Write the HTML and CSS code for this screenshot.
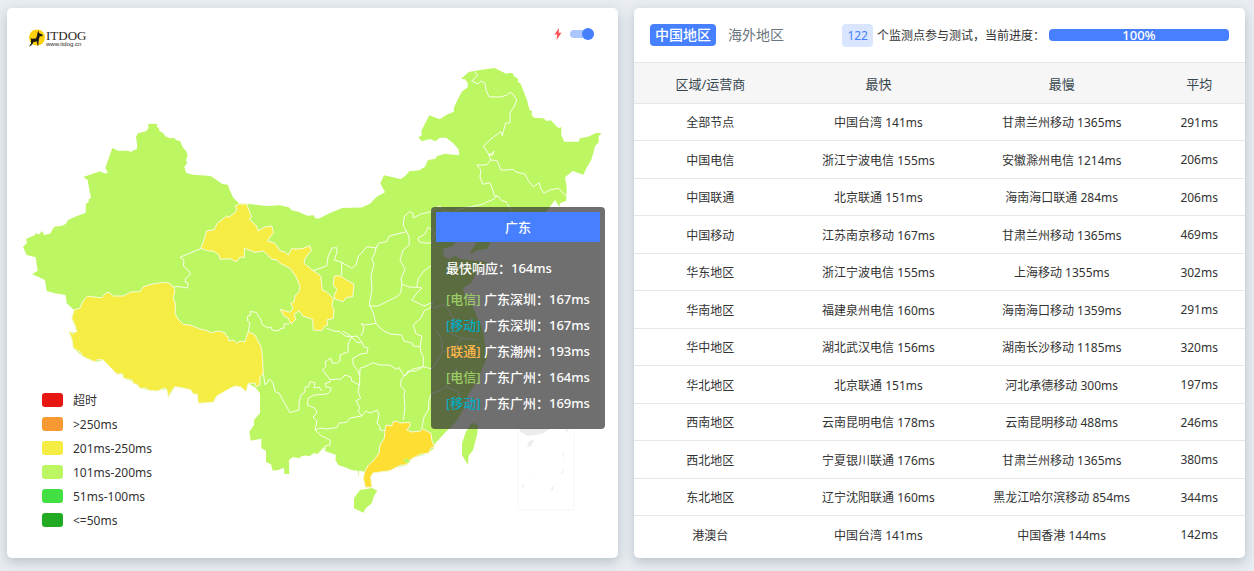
FILE: index.html
```
<!DOCTYPE html>
<html lang="zh-CN">
<head>
    <meta charset="UTF-8">
    <meta name="viewport" content="width=device-width, initial-scale=1.0">
    <title>ITDOG</title>
    <link rel="stylesheet" href="styles.css">
</head>
<body>
    <main class="row">
        <section class="card map-card">
            <svg class="map" viewBox="7 8 611 550" aria-label="中国地图">
                <!-- mainland -->
                <path class="land" d="M23 247L27 243 26 239 35 235 36 233 39 234.500 42 231 44 235 50 233.700 54.300 226.700 62 225.700 66 223.700 68 220 77 216 85.700 212.700 85.700 204 88.700 202 88.700 199 91 198 89 188 87.700 180 83.300 177 100 171.300 104 173.300 108 173 105.300 168 112.300 148 118.300 150.700 128.300 150.700 130.300 152 136.700 149 137.300 146 136 136.700 138 133.300 146 131.300 148.700 128 148 124 157.300 123.700 156.700 127 159 128 159 130.300 163.700 133.700 165.300 136.300 170 138.300 174.300 138 176 140 180 141 183 147.700 186 151 187.700 155.300 186 160 187.300 163 184.300 166.700 186.300 173 193.300 174.700 210.700 176 222.300 184 227.700 184.700 230 190.700 233 197.300 239 203.500 246.700 203.700 266.700 206 280 205.300 288.700 207.300 291.700 210.300 298.300 211.700 307.300 215.700 314 215.300 315 218.300 319 218.500 330 213 342.300 208 361.700 207.500 370 203.700 376.700 196.700 385 192.300 380.300 183.300 384 175.300 400.700 179 405 176.300 409.300 171.300 419.300 170.300 425 166.700 428 160 435.700 158.700 436.700 156.300 445 153.700 451 154.500 459.500 155 458.300 149 453.300 143.300 446 137.700 440 137.700 435.300 141.300 430 139 421.700 141.300 418.300 137 421.700 135.700 421.300 131 429.300 115.300 439.700 119.300 446.700 114.700 454 111.700 453.700 108.300 456 103 461.700 91.700 467.700 87.300 467.700 82.700 465 79.300 461 79 468.700 72 480 70 494.700 68 506.700 74 508 73 512.700 73 514 76 518.300 79 517.700 81.700 520.700 83.700 523 90 526.700 99.300 529.700 110.300 532 111 531.700 115 534 117.700 543.300 118.300 546.700 121 550.700 120.300 558.300 128 561.300 127.300 561.300 135 564.300 141.700 578.700 141.700 580 138.300 588.300 136.700 595.700 133 601.700 133 598.700 136.300 598.700 142.300 595.300 145.700 591.300 160 587 167 583.300 174.700 572.700 171 565 177.300 566.700 187.300 566.300 200.700 560 203.300 559.300 207 555 200 546.700 211 535 222 510 235 491 242 487 249 478 250 470.700 254 470 252 474.700 246 478 236 470 230 462 236 456 242 453 246 443 249 444 257 450 259 455 255.700 460 259 478 261 488 262 478 270 471 283 463 288 465 297 473 307 478 319 483 330 485 345 488 355 483 367 476 383 468 395 464.700 407 456 422 444.700 433 434.700 444 434 448 428.300 453.300 413 458 406.700 465 395 467.700 390 470.700 373 473 370.700 477 372 487.300 365.300 487.300 363.300 478.300 364.700 471.700 359 470.500 358.700 477.500 358 471 351.700 470 345 467.300 338.300 465 335.300 460 336 455 325 451 324 447.300 317.300 454 314 453 309.300 456.300 306 455.500 301.700 456 299.300 458.300 293 457 289 460 289.300 474 284.300 474 284 467.700 278 470 272.700 470.700 271 464.300 266 462 266 451 261.300 448 261.300 438.700 250.700 440.700 249.300 431.700 254 425 254 420 260 413.300 260 393.300 256 388 248.300 383.300 246 391.700 241 387 235 386 228.300 389.300 216.700 396 213.300 402.300 198.300 403.300 197.300 394.300 191 390 175 386.700 168.300 398 166.700 389.300 150 390.700 140 387.700 133.300 381.700 123.300 378.300 122.700 374 116.700 374 110 367 103.300 360 95 362 83.300 356.700 73.300 348.300 71.700 338.300 69 332.700 76.700 331.700 71.700 318.300 74 310 66.700 303.300 65.700 295 55 293.300 46.700 291 45 280 32.300 274.300 37.700 270.700 35.700 257.300 26.700 255Z"/>
                <!-- Hainan, Taiwan -->
                <path class="land" d="M360 490L366 489 372 488 377.300 490.700 374 496 371.700 503.300 366 508 363.300 512.700 354 508.300 354 498.300Z"/>
                <path class="land" d="M471 424L475 423 478 426 477 435 473 450 468.500 456 468 465 462 455 462 443 466 431.700Z"/>
                <!-- Tibet -->
                <path class="land slow" d="M74 310L80 308 83 301 87.300 296 94 297 101.700 297.700 106.700 292.300 110 293 113.300 296 123.300 296 131 292 140 291.700 143 287 150 284.500 163.300 282.300 168 283 171.700 285 175 290 173.300 298.300 175.500 304 175 313.300 178 319 183.300 324.300 190 325 200 329 205 330 211.700 332.700 219 331 225 332.700 226 336 228.300 337 229 341 233 340 237.300 343.300 240 341 245 342 246.700 336 248.300 331.700 255 335 258 341 261 346.700 262 353 262.500 360 263.300 373.300 260 377 260 385 256 386.700 255 383 248.300 383.300 246 391.700 241 387 235 386 228.300 389.300 216.700 396 213.300 402.300 198.300 403.300 197.300 394.300 193 394 191 390 183 388 175 386.700 170 393 168.300 398 166.700 389.300 164 388 158 391 150 390.700 145 388 140 388.500 137 384 133.300 384 132 380 123.300 378.300 122.700 374 116.700 374 110 367 103.300 360 97 359.500 95 362 83.300 356.700 80 352 73.300 348.300 71.700 338.300 69 332.700 71 331 72 334 76.700 331.700 75 325 71.700 318.300Z"/>
                <!-- Gansu -->
                <path class="land slow" d="M200.700 248.300L204 240 206.700 230.700 214 230 217.300 223.300 226.700 216 229 217 235 212.700 237 209 235 206 239.300 204 246.700 204 251.700 217.300 249 219 256.700 226 258 231 265 227 271.700 226 273.700 232.700 267.300 240.700 275 243.300 280 250.700 285 252 288.300 255 291.700 248.700 297 249 303.300 248.300 310 245.700 311.300 250.700 305 258.300 304 263.300 313.300 270.700 320.700 276 322.300 290 326.700 292 333.300 298.300 332 306 334 310 333.300 318.300 326.700 320 328 325 325 326 321.700 330.700 313.300 330 312.700 319.300 302.700 316 299 310.700 294 314.300 296 319 291 324 288.300 318.300 284 316 280 309.300 290 312.300 293 308 290.700 303.300 294 302 295 296 299 291.700 300 286 296 276.700 290 268.300 280 263.300 277 260 272 259.300 263.300 251 255 252.300 244.300 248.300 244.300 257.700 240 257 236.700 261.700 230 258.700 220 259.300 219 255 213 251 208.300 251Z"/>
                <path class="land slow" d="M334.300 276L340 275.700 345 279 354 284.300 352.700 296.700 346 297.500 343.300 301.700 338 300 334 298.300 335 293 337.300 290 333.300 285Z"/>
                <!-- Guangdong, hovered -->
                <path class="land hovered" d="M386 425L391.700 426 393 422 396 421 400 423 410 422.300 410 426 406.700 430 412 432 420.700 431 422.700 428.700 431 433.300 432 441 434.500 447 431 448 428.300 453.300 421 454 413 458 407 462 406.700 465 401 465 395 468 390 470.700 373 473 370.700 477 372 487.300 365.300 487.300 363.300 478.300 364.700 471.700 368.300 465 373 461 379 453.300 380 445 384.300 438.300 385 430Z"/>
                <path class="land" d="M403 461l3-3 3 2-1 3z"/>
                <!-- province borders -->
                <g class="border">
                    <path d="M201 248.500L190 253 180 257.300 184 260 183.300 266 187 269 190.700 274.300 186 278 185 282 188 283 187.700 288 178 286.500 173.300 287"/>
                    <path d="M248.300 331.700L250 323 247.700 321 247.700 316 251 315 250 311.500 256 312.300 260 318 262.700 325 268 328 271 327 272 330 278.300 331 280 329 284 328 284 324 289 324"/>
                    <path d="M263.300 373L265 385 267 383 269.300 379 273 383 275 391.700 279 393 284 402 290 412.700 299 410 299 403 301 395 305 392 305 387 308 387 310 381.700 315 382.700 314 388 319 387 321.700 391"/>
                    <path d="M330.700 391L327 394 314 395 308.300 398.300 307.300 405 315 408.300 317 413 313 417 317 421 315 430 320 428 325 429 336.700 427.700 339 423 346.700 422.300 350 418 361.700 416 358 411 360 408 356 400.700 360.700 398.300 358 392 359.300 385 351.700 381 351 377 345 375 341 379 330 379.500 330 382 325 383.500 326 387 330.700 387.500Z"/>
                    <path d="M315 430L321.700 436 330 440 330 445 325 446 325 450M361.700 416L366 411 370 413 377.300 410 379 415 377 423 380 426.700 380 430 385 430.500"/>
                    <path d="M359.500 385L360 368.300 364 367 373.300 362.700 380 365 390 365 396 369.300 399 367.500 404 376 401 380 400.700 386.700 405 390 404 395 405 408 403.300 420"/>
                    <path d="M343 331L351.700 336.700 348 344 348.300 351.700 340 355 340 361 336.700 363.300 332 363 331 358 325 361.700 326 366 322.700 370 325 373 330 379.500M351 336.700L358 343 362 342 364 347 368 348 367 353 361 354 352.700 358.300 353.300 365 358 371 359.500 376"/>
                    <path d="M326.700 328.300L334 331 340 331.700 345 336 350 336.700 357 336 361.700 342M360.500 336L362.700 333 364 327 361 323.500 365 325 376 323.300 380 328 385 331.700 390 334 401.700 335 404 341 412 343 413 346 420 346.700 421 352 423.300 357 423.300 366.700 416 371 408 371 405 376"/>
                    <path d="M376.700 246L374 255 371.700 259 374 264 371 276 372 289 369.300 305 373 312 376 323.300"/>
                    <path d="M313 270.700L326.700 266 328 257 332 248 336.700 247.700 337 252 334.300 260 341 262 351.700 268.300 356 265 358 257 366.700 246.700 376 248 379 243 386.700 241.700 389.300 236 397 234 406.700 231.700 403.300 226 404 217 409.300 211.700 413 213 413.300 218 421 214 431 211.700 440 205.700 444 211 452 213 456.700 210 483.300 204 487 202 494 199 496.700 195"/>
                    <path d="M341.700 262L341.700 275.700M406.700 231.700L409 237 409.300 245 403 250 400 260 405 269 401 279 402 284 400.700 293.300 396 297 386.700 301.700 378 306 369.300 306"/>
                    <path d="M401.700 284L409 287 416.700 287.300 422 288 416 294 411.700 300 424 306 433 302 430 308 424 311 421 318 413.300 325 416 334 422 336 420 346.700M416.700 287.300L418.300 278.300 424 271 431 265.700"/>
                    <path d="M419.300 242L418 238 425 234 428.300 227 435 233 431 243 424 243ZM435 233L446 240M433 308L444 304 450 312 456 324 451 334 462 338"/>
                    <path d="M421.700 428.700L424 417 428.300 410 429 400 431.700 393.300 439 391 446.700 386.700 452 374 457 368M404 376L413 369 423.300 366.700 432 369 438 360 442 352 451 350 462 338 478 340M446.700 386.700L458 392 462 404M436 330L442 340 442 352"/>
                    <path d="M475 71.700L477.700 75.700 471.700 81 478 84 481 81 485 83.300 486 90 489 96.700 500 97 506.700 95.300 510 92.300 513 94 516.700 100 514 107 510 112.700 510 122.700 505.700 123 502.300 135.700 501 131.700 492 138 483.300 146 490 156 494 151 493 155 488.700 154 490.700 160"/>
                    <path d="M490.700 160L497.300 160.700 500.700 170 507 170 513.300 169.300 516 172 525 174 528.300 180.700 533.300 186.700 539.300 182.700 541 189 544 193.300 550 190 558.300 188.300 566 195.700M490.700 160L486.700 165 476.700 165 481 170 480 177 482.700 184.300 490 182.700 493 190 494.300 195.700 499 197 502 201 506 201.700 511.700 211.300"/>
                </g>
                <!-- South China Sea inset -->
                <rect class="inset" x="518" y="428" width="56" height="82"/>
                <path class="isle" d="M520 428h31l-9 6-14 2-8-4zM529 441l5-1-3 6-4 1zM529 473l3-3-4 5zM522 484l2 1-1 4zM551 489l4-5-3 7zM561 474l3-6-1 5zM563 453h1v4h-1zM565 430l4-1-2 3zM570 436l1-1-1 3zM539 501l3-1-3 1z"/>
            </svg>

            <div class="map-head">
                <a class="logo" href="#">
                    <svg width="18" height="18" viewBox="0 0 18 18">
                        <circle cx="9" cy="8.500" r="8" fill="#fdd20a"/>
                        <path fill="#1d1a12" d="M10.500 1.500L11 4 15 6 14 7.200 11.800 7.200 11 10 10.600 12 10.300 16.500H9.400L9 12.500 5.500 13 4.500 15 2.500 17 1 17.500 3 14.500V10.500L2.500 9 4 9.800 8 9.500 9 6.500 9.500 4Z"/>
                    </svg>
                    <span class="logo-text">
                        <span class="logo-name">ITDOG</span>
                        <span class="logo-url">www.itdog.cn</span>
                    </span>
                </a>
                <label class="fast-switch">
                    <svg width="8" height="14" viewBox="0 0 8 14"><path fill="#ff5252" d="M5 1L0.500 7.500H3.200L2.500 13 7.500 5.800H4.700Z"/></svg>
                    <input type="checkbox" aria-label="极速模式" checked>
                </label>
            </div>

            <ul class="legend">
                <li><i class="c1"></i>超时</li>
                <li><i class="c2"></i>&gt;250ms</li>
                <li><i class="c3"></i>201ms-250ms</li>
                <li><i class="c4"></i>101ms-200ms</li>
                <li><i class="c5"></i>51ms-100ms</li>
                <li><i class="c6"></i>&lt;=50ms</li>
            </ul>

            <div class="tooltip">
                <div class="tooltip-title">广东</div>
                <div class="tooltip-body">
                    <p>最快响应：164ms</p>
                    <ul>
                        <li><span class="dx">[电信]</span> 广东深圳：167ms</li>
                        <li><span class="yd">[移动]</span> 广东深圳：167ms</li>
                        <li><span class="lt">[联通]</span> 广东潮州：193ms</li>
                        <li><span class="dx">[电信]</span> 广东广州：164ms</li>
                        <li><span class="yd">[移动]</span> 广东广州：169ms</li>
                    </ul>
                </div>
            </div>
        </section>

        <section class="card">
            <div class="card-head">
                <div class="tabs">
                    <button type="button" class="active">中国地区</button>
                    <button type="button">海外地区</button>
                </div>
                <div class="status">
                    <span class="badge">122</span>
                    <span class="status-text">个监测点参与测试，当前进度：</span>
                    <div class="progress"><div class="progress-bar" style="width: 100%">100%</div></div>
                </div>
            </div>
            <table>
                <thead>
                    <tr><th class="w-area">区域/运营商</th><th class="w-node">最快</th><th class="w-node">最慢</th><th>平均</th></tr>
                </thead>
                <tbody>
                    <tr><td>全部节点</td><td>中国台湾 141ms</td><td>甘肃兰州移动 1365ms</td><td>291ms</td></tr>
                    <tr><td>中国电信</td><td>浙江宁波电信 155ms</td><td>安徽滁州电信 1214ms</td><td>206ms</td></tr>
                    <tr><td>中国联通</td><td>北京联通 151ms</td><td>海南海口联通 284ms</td><td>206ms</td></tr>
                    <tr><td>中国移动</td><td>江苏南京移动 167ms</td><td>甘肃兰州移动 1365ms</td><td>469ms</td></tr>
                    <tr><td>华东地区</td><td>浙江宁波电信 155ms</td><td>上海移动 1355ms</td><td>302ms</td></tr>
                    <tr><td>华南地区</td><td>福建泉州电信 160ms</td><td>海南海口移动 1359ms</td><td>291ms</td></tr>
                    <tr><td>华中地区</td><td>湖北武汉电信 156ms</td><td>湖南长沙移动 1185ms</td><td>320ms</td></tr>
                    <tr><td>华北地区</td><td>北京联通 151ms</td><td>河北承德移动 300ms</td><td>197ms</td></tr>
                    <tr><td>西南地区</td><td>云南昆明电信 178ms</td><td>云南昆明移动 488ms</td><td>246ms</td></tr>
                    <tr><td>西北地区</td><td>宁夏银川联通 176ms</td><td>甘肃兰州移动 1365ms</td><td>380ms</td></tr>
                    <tr><td>东北地区</td><td>辽宁沈阳联通 160ms</td><td>黑龙江哈尔滨移动 854ms</td><td>344ms</td></tr>
                    <tr><td>港澳台</td><td>中国台湾 141ms</td><td>中国香港 144ms</td><td>142ms</td></tr>
                </tbody>
            </table>
        </section>
    </main>
</body>
</html>
```
FILE: styles.css
```
* {
    box-sizing: border-box;
}

body {
    margin: 0;
    background-color: #e9edf2;
    color: #333;
    font-family: "Noto Sans", "Noto Sans CJK SC", sans-serif;
    font-size: 12px;
}

ul, p {
    margin: 0;
    padding: 0;
    list-style: none;
}

.row {
    display: grid;
    grid-template-columns: 1fr 1fr;
    gap: 16px;
    padding: 8px 9px 13px 7px;
}

.card {
    position: relative;
    background-color: #fff;
    border-radius: 5px;
    box-shadow: 0 4px 12px rgba(69, 90, 100, 0.3);
}

/* map */
.map {
    display: block;
    width: 100%;
}

.land {
    fill: #bdf663;
}

.land.slow {
    fill: #f6ed44;
    stroke: #f6fbdc;
    stroke-width: 1;
}

.land.hovered {
    fill: #ffde33;
    stroke: #f6fbdc;
    stroke-width: 1;
}

.border {
    fill: none;
    stroke: #f8ffec;
    stroke-width: 1;
    stroke-linejoin: round;
}

.inset {
    fill: none;
    stroke: #f7f7f7;
}

.isle {
    fill: #ececec;
}

.map-head {
    position: absolute;
    top: 20px;
    left: 21px;
    right: 24px;
    display: flex;
    justify-content: space-between;
    align-items: flex-start;
}

.logo {
    display: flex;
    padding-top: 1px;
    color: #2b2622;
    text-decoration: none;
}

.logo-text {
    display: flex;
    flex-direction: column;
}

.logo-name {
    font-family: "Liberation Serif", serif;
    font-size: 13px;
    line-height: 14px;
}

.logo-url {
    font-family: "Liberation Sans", sans-serif;
    font-size: 6px;
    line-height: 3px;
}

.fast-switch {
    display: flex;
    align-items: center;
    gap: 8px;
    height: 12px;
}

.fast-switch input {
    appearance: none;
    position: relative;
    width: 24px;
    height: 8px;
    margin: 0;
    border-radius: 4px;
    background-color: #abc5ff;
    cursor: pointer;
}

.fast-switch input::after {
    content: "";
    position: absolute;
    top: -2px;
    left: 0;
    width: 12px;
    height: 12px;
    border-radius: 50%;
    background-color: #fff;
}

.fast-switch input:checked::after {
    left: 12px;
    background-color: #4680ff;
}

.legend {
    position: absolute;
    left: 35px;
    bottom: 26px;
}

.legend li {
    display: flex;
    align-items: center;
    gap: 10px;
    height: 24px;
}

.legend i {
    width: 21px;
    height: 14px;
    border-radius: 3px;
}

.c1 { background-color: #e61610; }
.c2 { background-color: #f79a33; }
.c3 { background-color: #f6ed44; }
.c4 { background-color: #bdf663; }
.c5 { background-color: #42e042; }
.c6 { background-color: #22aa22; }

.tooltip {
    position: absolute;
    top: 199px;
    right: 13px;
    width: 174px;
    padding: 5px;
    border-radius: 4px;
    background-color: rgba(50, 50, 50, 0.7);
    color: #fff;
    font-size: 13px;
    font-weight: 500;
    line-height: 26px;
    white-space: nowrap;
}

.tooltip-title {
    background-color: #4680ff;
    line-height: 30px;
    text-align: center;
}

.tooltip-body {
    padding: 13px 10px 8px;
}

.tooltip-body p {
    margin-bottom: 5px;
}

.dx { color: #9ccc65; }
.yd { color: #00acc1; }
.lt { color: #ffb64d; }

/* result table */
.card-head {
    display: flex;
    justify-content: space-between;
    align-items: center;
    height: 54px;
    padding: 0 16px;
}

.tabs {
    display: flex;
    gap: 7px;
}

.tabs button {
    height: 22px;
    padding: 0 5px;
    border: none;
    border-radius: 4px;
    background: none;
    color: #6c757d;
    font-family: inherit;
    font-size: 14px;
    line-height: 22px;
    cursor: pointer;
}

.tabs .active {
    background-color: #4680ff;
    color: #fff;
    font-weight: 500;
}

.status {
    display: flex;
    align-items: center;
    gap: 4px;
}

.badge {
    padding: 0 5px;
    border-radius: 4px;
    background-color: #dae6ff;
    color: #4680ff;
    font-size: 12px;
    line-height: 23px;
}

.progress {
    width: 180px;
    border-radius: 4px;
    background-color: #e9ecef;
}

.progress-bar {
    border-radius: 4px;
    background-color: #4680ff;
    color: #fff;
    font-size: 13px;
    font-weight: 500;
    line-height: 12px;
    text-align: center;
}

table {
    width: 100%;
    border-collapse: collapse;
    table-layout: fixed;
}

th, td {
    padding: 0;
    border-top: 1px solid #e2e8ee;
    text-align: center;
}

th {
    height: 41px;
    background-color: #f6f6f6;
    color: #37474f;
    font-size: 13px;
    font-weight: 400;
}

td {
    height: 37px;
}

tbody tr:nth-child(even) td {
    height: 38px;
}

.w-area {
    width: 25%;
}

.w-node {
    width: 30%;
}
```
